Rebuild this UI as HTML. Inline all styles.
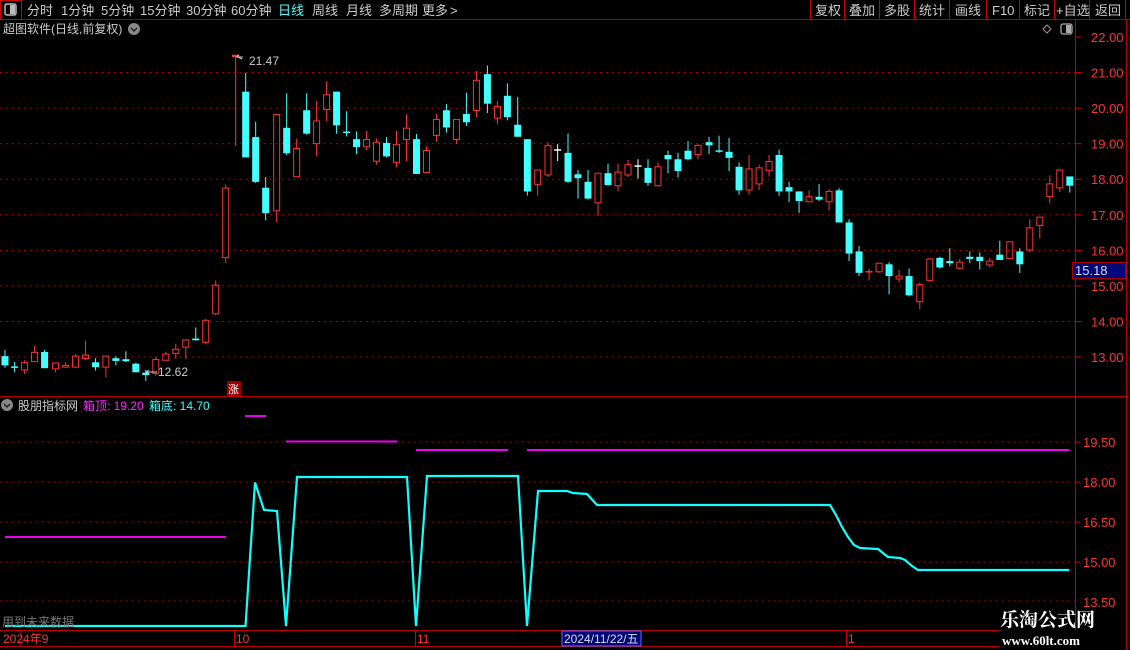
<!DOCTYPE html>
<html><head><meta charset="utf-8"><style>
html,body{margin:0;padding:0;background:#000;width:1130px;height:650px;overflow:hidden}
body{font-family:"Liberation Sans","Noto Sans CJK SC",sans-serif;position:relative}
</style></head><body>
<svg id="s" width="1130" height="650" style="position:absolute;left:0;top:0" xmlns="http://www.w3.org/2000/svg" font-family="Liberation Sans, Noto Sans CJK SC, sans-serif">
<line x1="0" y1="19.5" x2="1130" y2="19.5" stroke="#a00" />
<rect x="0.5" y="0.5" width="21" height="19" fill="none" stroke="#c00"/>
<rect x="5" y="4" width="11" height="11" rx="2" fill="none" stroke="#bbb" stroke-width="1.5"/>
<rect x="10" y="5" width="5" height="9" fill="#bbb"/>
<g font-size="13" fill="#ccc">
<text x="27" y="15">分时</text><text x="61" y="15">1分钟</text><text x="101" y="15">5分钟</text>
<text x="140" y="15">15分钟</text><text x="186" y="15">30分钟</text><text x="231" y="15">60分钟</text>
<text x="278" y="15" fill="#5ff">日线</text><text x="312" y="15">周线</text><text x="346" y="15">月线</text>
<text x="379" y="15">多周期</text><text x="422" y="15">更多</text><text x="450" y="15">&gt;</text>
</g>
<g stroke="#c00" fill="none">
<line x1="810.5" y1="0" x2="810.5" y2="19"/><line x1="844.5" y1="0" x2="844.5" y2="19"/>
<line x1="879.5" y1="0" x2="879.5" y2="19"/><line x1="914.5" y1="0" x2="914.5" y2="19"/>
<line x1="949.5" y1="0" x2="949.5" y2="19"/><line x1="986.5" y1="0" x2="986.5" y2="19"/>
<line x1="1019.5" y1="0" x2="1019.5" y2="19"/><line x1="1054.5" y1="0" x2="1054.5" y2="19"/>
<line x1="1089.5" y1="0" x2="1089.5" y2="19"/><line x1="1125.5" y1="0" x2="1125.5" y2="19"/>
</g>
<g font-size="13" fill="#ccc">
<text x="815" y="15">复权</text><text x="849" y="15">叠加</text><text x="884" y="15">多股</text>
<text x="919" y="15">统计</text><text x="955" y="15">画线</text><text x="992" y="15">F10</text>
<text x="1024" y="15">标记</text><text x="1056" y="15">+自选</text><text x="1095" y="15">返回</text>
</g>
<text x="3" y="33" font-size="12" fill="#ccc">超图软件(日线,前复权)</text>
<circle cx="134" cy="29" r="6" fill="#888"/><path d="M131 28l3 3 3-3" stroke="#222" stroke-width="1.5" fill="none"/>
<path d="M1047 25l4 4-4 4-4-4z" stroke="#999" fill="none"/>
<rect x="1061" y="24" width="11" height="10" rx="2" fill="none" stroke="#aaa" stroke-width="1.3"/><rect x="1066" y="25" width="5" height="8" fill="#aaa"/>
<line x1="1075.5" y1="20" x2="1075.5" y2="630" stroke="#b00"/>
<line x1="1126.5" y1="20" x2="1126.5" y2="650" stroke="#b00"/>
<line x1="0" y1="396.5" x2="1126" y2="396.5" stroke="#b00"/>
<line x1="0" y1="630.5" x2="1000" y2="630.5" stroke="#b00"/>
<line x1="0" y1="646.5" x2="1000" y2="646.5" stroke="#b00"/>
<g id="grid"></g>
<g id="cd"></g>
<g font-size="13" fill="#f33" id="pl"></g>
<rect x="1072.5" y="262.5" width="53" height="16" fill="#00067a" stroke="#a00"/>
<text x="1075" y="275" font-size="13" fill="#ddd">15.18</text>
<text x="249" y="65" font-size="12" fill="#ccc">21.47</text>
<path d="M236 57h7M236 57l3-2M238 57l4 2" stroke="#ccc" fill="none"/>
<rect x="232" y="55" width="4" height="2" fill="#f33"/>
<text x="158" y="376" font-size="12" fill="#ccc">12.62</text>
<path d="M146 372h11M146 372l3-2M146 372l3 2" stroke="#ccc" fill="none"/>
<rect x="227" y="381" width="14" height="15" fill="#900"/>
<text x="228" y="393" font-size="11" fill="#fff">涨</text>
<circle cx="7" cy="405" r="6" fill="#888"/><path d="M4 404l3 3 3-3" stroke="#222" stroke-width="1.5" fill="none"/>
<text x="18" y="410" font-size="12" fill="#ccc">股朋指标网</text>
<text x="83" y="410" font-size="12" fill="#f2f">箱顶: 19.20</text>
<text x="149" y="410" font-size="12" fill="#3ff">箱底: 14.70</text>
<g stroke="#c00" stroke-dasharray="1 5">
<line x1="0" y1="442" x2="1075" y2="442"/><line x1="0" y1="482" x2="1075" y2="482"/>
<line x1="0" y1="522" x2="1075" y2="522"/><line x1="0" y1="562" x2="1075" y2="562"/>
<line x1="0" y1="601" x2="1075" y2="601"/>
</g>
<g stroke="#e0e" stroke-width="2">
<line x1="5" y1="537" x2="226" y2="537"/><line x1="245" y1="416" x2="266" y2="416"/>
<line x1="286" y1="441.5" x2="397" y2="441.5"/><line x1="416" y1="450" x2="508" y2="450"/>
<line x1="527" y1="450" x2="1069" y2="450"/>
</g>
<polyline fill="none" stroke="#1ff" stroke-width="2.2" points="5,626 245.5,626 255,482.5 264,510 277,511 286,626 297,477 407,477 416,626 427,476 518,476 527,626 538,491 567,491 573,493 587,494 597,505 830,505 836,515 842,527 848,537 854,545 860,548 878,549 888,557 900,558 905,560 912,566 918,570 1069,570"/>
<g font-size="13" fill="#f33">
<text x="1083" y="447">19.50</text><text x="1083" y="487">18.00</text>
<text x="1083" y="527">16.50</text><text x="1083" y="567">15.00</text><text x="1083" y="607">13.50</text>
</g>
<g stroke="#c00"><line x1="1075" y1="442" x2="1080" y2="442"/><line x1="1075" y1="482" x2="1080" y2="482"/><line x1="1075" y1="522" x2="1080" y2="522"/><line x1="1075" y1="562" x2="1080" y2="562"/></g>
<text x="2" y="626" font-size="12" fill="#777">用到未来数据</text>
<g stroke="#c00"><line x1="21" y1="630" x2="21" y2="646"/><line x1="234.5" y1="630" x2="234.5" y2="646"/><line x1="415.5" y1="630" x2="415.5" y2="646"/><line x1="846.5" y1="630" x2="846.5" y2="646"/></g>
<g font-size="12" fill="#f33"><text x="3" y="643">2024年9</text><text x="236" y="643">10</text><text x="417" y="643">11</text><text x="848" y="643">1</text></g>
<rect x="562" y="631" width="79" height="15" fill="#00067a" stroke="#66f"/>
<text x="564" y="643" font-size="12" fill="#ddd">2024/11/22/五</text>
<text x="1000" y="626" font-size="19" font-weight="bold" fill="#fff" font-family="Liberation Serif, Noto Serif CJK SC, serif">乐淘公式网</text>
<text x="1002" y="645" font-size="13" font-weight="bold" fill="#fff" font-family="Liberation Serif, serif">www.60lt.com</text>
</svg>
<script>
var NS="http://www.w3.org/2000/svg";
function el(p,t,a){var e=document.createElementNS(NS,t);for(var k in a)e.setAttribute(k,a[k]);p.appendChild(e);return e;}
var py=function(p){return 37+(22-p)*35.56;};
var g=document.getElementById('grid'),pl=document.getElementById('pl');
for(var p=22;p>=13;p--){var y=py(p);if(p<22)el(g,'line',{x1:0,y1:y,x2:1075,y2:y,stroke:'#c00','stroke-dasharray':'1 5'});
el(g,'line',{x1:1075,y1:y,x2:1081,y2:y,stroke:'#c00'});
var t=el(pl,'text',{x:1091,y:y+5});t.textContent=p.toFixed(2);}
var cd=document.getElementById('cd');
function cand(x,bt,bb,hi,lo,c){
 var col=c=='c'?'#4ff':(c=='r'?'#f33':'#fff');
 if(c=='c'||c=='w'){el(cd,'line',{x1:x,y1:hi,x2:x,y2:lo,stroke:col});
  if(bb-bt<1.5)el(cd,'line',{x1:x-3.5,y1:bt,x2:x+3.5,y2:bt,stroke:col,'stroke-width':1.5});
  else el(cd,'rect',{x:x-3.5,y:bt,width:7,height:bb-bt,fill:col});}
 else{el(cd,'line',{x1:x,y1:hi,x2:x,y2:bt,stroke:col});el(cd,'line',{x1:x,y1:bb,x2:x,y2:lo,stroke:col});
  if(bb-bt<1.5)el(cd,'line',{x1:x-3.5,y1:bt,x2:x+3.5,y2:bt,stroke:col,'stroke-width':1.5});
  else el(cd,'rect',{x:x-3,y:bt,width:6,height:bb-bt,fill:'none',stroke:col});}
}
var A=[[13,918,945,900,952,'c'],[41,950,951,935,965,'c'],[70,937,958,930,970,'r'],[99,907,934,888,934,'r'],[128,906,953,900,953,'c'],[160,938,955,938,965,'r'],[189,945,950,935,952,'r'],[218,918,950,912,950,'r'],[247,915,925,873,930,'r'],[276,936,950,924,960,'c'],[306,918,950,918,980,'r'],[335,924,932,918,945,'c'],[364,927,933,904,935,'c'],[393,940,965,937,965,'c'],[422,966,973,958,990,'c'],[451,928,968,920,975,'r'],[480,912,930,905,930,'r'],[509,898,910,882,926,'r'],[538,871,892,871,926,'r'],[567,867,872,835,873,'c'],[596,814,878,810,884,'r'],[625,712,795,698,800,'r'],[654,430,632,420,648,'r'],[683,45,48,45,308,'r'],[712,150,341,96,341,'c'],[741,282,412,237,415,'c'],[770,429,503,398,524,'c'],[802,216,496,216,530,'r'],[831,255,329,155,334,'c'],[860,315,397,287,397,'r'],[889,204,272,155,275,'c'],[918,235,301,177,338,'r'],[947,159,202,120,236,'r'],[976,150,248,150,272,'c'],[1005,268,269,207,280,'c'],[1034,288,311,266,332,'c'],[1063,289,310,264,320,'r'],[1092,297,352,286,362,'r'],[1121,299,338,282,341,'c'],[1150,303,355,264,370,'r'],[1179,256,289,216,352,'r'],[1208,288,389,273,389,'c'],[1237,321,385,309,387,'r'],[1266,231,277,215,296,'r'],[1295,204,254,186,269,'c'],[1324,231,289,231,302,'r'],[1353,215,239,153,250,'c'],[1382,117,205,90,225,'r'],[1414,99,185,74,212,'c'],[1443,193,227,177,245,'r'],[1472,162,224,126,233,'c'],[1502,246,281,165,281,'c'],[1530,288,440,288,452,'c']];
A.forEach(function(a){var s=2.904;cand(a[0]/s+0.5,40+a[1]/s,40+a[2]/s,40+a[3]/s,40+a[4]/s,a[5]);});
var B=[[48,168,208,168,240,'r'],[77,100,182,90,188,'r'],[104,112,112,96,143,'w'],[133,120,201,66,204,'c'],[161,180,191,168,248,'c'],[189,201,248,168,251,'c'],[217,177,260,177,296,'r'],[245,177,210,150,212,'c'],[273,174,212,150,228,'r'],[301,153,182,140,188,'r'],[329,157,157,138,192,'w'],[357,162,204,138,212,'c'],[385,159,212,147,215,'r'],[413,126,138,114,177,'c'],[441,138,171,120,189,'c'],[469,114,138,87,141,'c'],[497,99,125,96,138,'r'],[528,90,99,75,123,'c'],[556,115,117,72,120,'c'],[584,117,134,78,171,'c'],[612,159,225,147,237,'c'],[640,165,224,126,237,'r'],[668,162,207,153,224,'r'],[696,144,170,126,186,'r'],[724,126,228,111,240,'c'],[752,216,228,201,258,'c'],[780,228,255,228,288,'c'],[808,243,257,225,257,'r'],[836,243,251,207,255,'c'],[864,228,257,222,282,'r'],[892,225,315,219,315,'c'],[920,315,402,306,423,'c'],[948,396,456,381,465,'c'],[976,453,455,444,477,'r'],[1004,429,453,429,456,'r'],[1032,432,465,426,516,'c'],[1060,465,473,447,483,'r'],[1088,465,519,444,522,'c'],[1118,489,537,483,558,'r'],[1146,417,477,414,480,'r'],[1174,414,441,411,444,'c'],[1202,423,429,387,438,'c'],[1230,426,443,417,447,'r'],[1258,411,417,396,429,'c'],[1286,411,423,399,447,'c'],[1314,423,434,414,441,'r'],[1342,405,420,366,420,'c'],[1370,369,416,369,416,'r'],[1398,396,432,387,456,'c'],[1426,330,392,306,398,'r'],[1454,300,323,300,360,'r'],[1482,207,242,183,261,'r'],[1510,168,218,168,230,'r'],[1538,186,212,186,231,'c']];
B.forEach(function(a){var s=2.8;cand(520+a[0]/s+0.5,110+a[1]/s,110+a[2]/s,110+a[3]/s,110+a[4]/s,a[5]);});
</script>
</body></html>
